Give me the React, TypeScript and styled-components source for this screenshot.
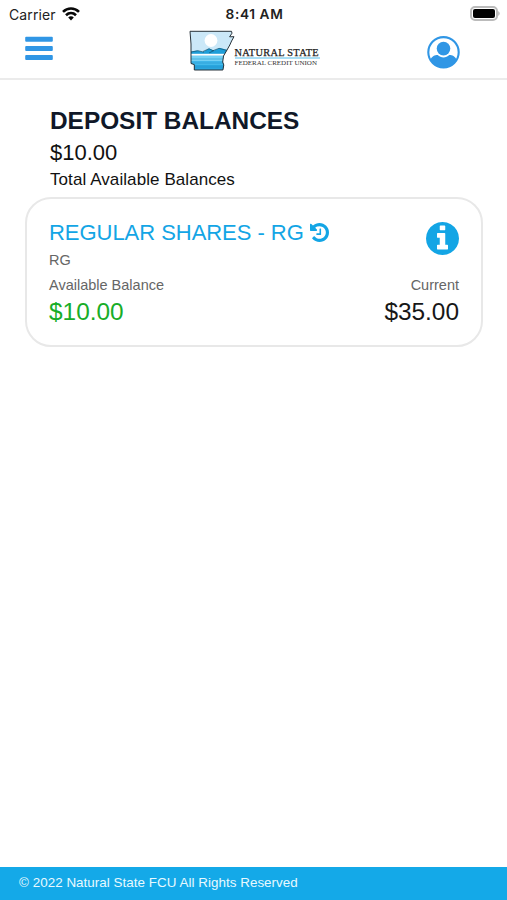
import React from "react";
import styled, { createGlobalStyle } from "styled-components";

const GlobalStyle = createGlobalStyle`
  * { box-sizing: border-box; }
  body { margin: 0; background: #fff; }
  button { border: 0; padding: 0; background: none; display: block; }
  svg { display: block; }
`;

const Screen = styled.div`
  width: 100%;
  height: 100vh;
  display: flex;
  flex-direction: column;
  overflow: hidden;
  background: #fff;
  font-family: "Liberation Sans", Arial, sans-serif;
  white-space: nowrap;
`;

const StatusBar = styled.div`
  display: grid;
  grid-template-columns: 1fr auto 1fr;
  height: 27px;
  padding: 0 7px 0 9px;
  align-items: center;
  font-family: Inter, sans-serif;
  font-size: 14px;
  line-height: 27px;
  color: #222;
`;

const Carrier = styled.div`
  display: flex;
  align-items: center;
  gap: 6px;
  letter-spacing: 0.1px;

  svg { margin-top: -1px; }
`;

const Clock = styled.div`
  font-size: 13.7px;
  font-weight: 600;
  letter-spacing: 0.6px;
  padding-top: 1px;
`;

const Battery = styled.div`
  justify-self: end;
  margin-right: -1px;
`;

const Header = styled.header`
  display: grid;
  grid-template-columns: 1fr auto 1fr;
  height: 53px;
  padding: 0 47px 0 25px;
  border-bottom: 2px solid #ebebeb;
`;

const MenuButton = styled.button`
  justify-self: start;
  align-self: start;
  padding-top: 9px;
`;

const ProfileButton = styled.button`
  justify-self: end;
  align-self: start;
  padding-top: 8px;
`;

const Brand = styled.div`
  display: flex;
  gap: 0;
  padding: 3px 0 0 23px;
`;

const BrandText = styled.div`
  padding-top: 17px;
  width: 85px;
  font-family: "Liberation Serif", serif;
`;

const BrandName = styled.div`
  height: 12px;
  font-size: 10.3px;
  line-height: 12px;
  letter-spacing: 0.32px;
  color: #222;
  border-bottom: 2px solid #a9def5;
  -webkit-text-stroke: 0.25px #222;
`;

const BrandSub = styled.div`
  font-size: 7px;
  line-height: 8px;
  letter-spacing: 0;
  color: #333;
`;

const Main = styled.main`
  flex: 1;
  padding: 25px 24px 0 25px;
`;

const Summary = styled.section`
  padding-left: 25px;
`;

const Title = styled.h1`
  margin: 0;
  font-size: 24.4px;
  line-height: 32px;
  font-weight: 700;
  color: #101828;
`;

const Total = styled.div`
  font-size: 22px;
  line-height: 31px;
  color: #111;
`;

const TotalLabel = styled.div`
  font-size: 17px;
  line-height: 24px;
  letter-spacing: 0.08px;
  color: #111;
`;

const Card = styled.section`
  height: 150px;
  margin-top: 5px;
  padding: 18px 22px 0;
  border: 2px solid #e8e8e8;
  border-radius: 26px;
`;

const CardTop = styled.div`
  display: flex;
  justify-content: space-between;
  height: 56px;
`;

const AccountName = styled.div`
  display: flex;
  align-items: center;
  gap: 6px;
  font-size: 22px;
  line-height: 31px;
  letter-spacing: -0.04px;
  color: #13a5e5;
`;

const Caption = styled.div`
  font-size: 14.5px;
  line-height: 24px;
  color: #666;
`;

const InfoButton = styled.button`
  align-self: start;
  margin-top: 5px;
  color: #13a5e5;
`;

const Balances = styled.div`
  display: flex;
  justify-content: space-between;
`;

const Balance = styled.div<{ $end?: boolean }>`
  text-align: ${(p) => (p.$end ? "right" : "left")};
`;

const Amount = styled.div<{ $available?: boolean }>`
  font-size: 24.4px;
  line-height: 30px;
  color: ${(p) => (p.$available ? "#18ad28" : "#171717")};
`;

const Footer = styled.footer`
  height: 33px;
  padding-left: 19px;
  background: #14a9e8;
  color: #e8f9ff;
  font-size: 13.4px;
  letter-spacing: 0.04px;
  line-height: 31px;
`;

const Wifi = () => (
  <svg width="18" height="14" viewBox="0 0 18 14" fill="none" stroke="#080808" strokeWidth="2.6">
    <path d="M1 4.9C5.6.4 12.4.4 17 4.9" />
    <path d="M4 8.2C6.9 5.4 11.1 5.4 14 8.2" />
    <path d="M6.2 10.4C7.8 9 10.2 9 11.8 10.4L9 13.4Z" fill="#080808" stroke="none" />
  </svg>
);

const BatteryIcon = () => (
  <svg width="31" height="16" viewBox="0 0 31 16">
    <rect x="1" y="1" width="26" height="13" rx="4" fill="#fff" stroke="#bbb" strokeWidth="2" />
    <rect x="3" y="3" width="22" height="9" rx="2" fill="#000" />
    <path d="M28.3 5Q31 7.5 28.3 10Z" fill="#aaa" />
  </svg>
);

const MenuIcon = () => (
  <svg width="28" height="24" viewBox="0 0 28 24" fill="#3096e5">
    <rect x=".2" y=".8" width="27.6" height="5" rx="1" />
    <rect x=".2" y="9.9" width="27.6" height="5" rx="1" />
    <rect x=".2" y="18.9" width="27.6" height="5" rx="1" />
  </svg>
);

const ProfileIcon = () => (
  <svg width="33" height="34" viewBox="0 0 33 34" fill="#3096e5">
    <circle cx="16.5" cy="17.3" r="15.2" fill="#fff" stroke="#3096e5" strokeWidth="2.1" />
    <circle cx="16.5" cy="13.6" r="6.8" />
    <path d="M3.4 24.9C4.9 21 7.8 20 10.7 20C14 23.3 19 23.3 22.3 20C25.2 20 28.1 21 29.6 24.9C23.5 35.2 9.5 35.2 3.4 24.9Z" />
  </svg>
);

const HistoryIcon = () => (
  <svg width="19" height="19" viewBox="0 128 1536 1536" fill="currentColor">
    <path d="M1536 896q0 156-61 298t-164 245-245 164-298 61q-172 0-327-72.5t-264-204.5q-7-10-6.5-22.5t8.5-20.5l137-138q10-9 25-9 16 2 23 12 73 95 179 147t225 52q104 0 198.5-40.5t163.5-109.5 109.5-163.5 40.5-198.5-40.5-198.5-109.5-163.5-163.5-109.5-198.5-40.5q-98 0-188 35.5t-160 101.5l137 138q31 30 14 69-17 40-59 40h-448q-26 0-45-19t-19-45v-448q0-42 40-59 39-17 69 14l130 129q107-101 244.5-156.5t284.5-55.5q156 0 298 61t245 164 164 245 61 298zm-640-288v448q0 14-9 23t-23 9h-320q-14 0-23-9t-9-23v-64q0-14 9-23t23-9h224v-352q0-14 9-23t23-9h64q14 0 23 9t9 23z" />
  </svg>
);

const InfoIcon = () => (
  <svg width="33" height="33" viewBox="0 128 1536 1536" fill="currentColor">
    <path d="M1024 1376v-160q0-14-9-23t-23-9h-96v-512q0-14-9-23t-23-9h-320q-14 0-23 9t-9 23v160q0 14 9 23t23 9h96v320h-96q-14 0-23 9t-9 23v160q0 14 9 23t23 9h448q14 0 23-9t9-23zm-128-896v-160q0-14-9-23t-23-9h-192q-14 0-23 9t-9 23v160q0 14 9 23t23 9h192q14 0 23-9t9-23zm640 416q0 209-103 385.5t-279.5 279.5-385.5 103-385.5-103-279.5-279.5-103-385.5 103-385.5 279.5-279.5 385.5-103 385.5 103 279.5 279.5 103 385.5z" />
  </svg>
);

const STATE =
  "M1 1.3H42.5L43 3.2L40.6 6.8L45 6.7L42.6 11L40.8 15L38 20L34.5 26L33.7 32L34.8 35L33.9 40H5.3V34.6L2 33.5V14Z";

const StateLogo = () => (
  <svg width="46" height="42" viewBox="0 0 46 42">
    <defs>
      <clipPath id="state">
        <path d={STATE} />
      </clipPath>
    </defs>
    <g clipPath="url(#state)">
      <rect width="46" height="42" fill="#cbe8f8" />
      <circle cx="22" cy="10.5" r="6.4" fill="#fff" />
      <path d="M0 22L8 20.5L14 22L20 18.5L25 20.5L31 18L39 20V42H0Z" fill="#1e9ed9" />
      <path d="M2 22L9 20.7L15 22.2M14 21.5L20 18.7L24 20.7L30 18.3L38 20.5M20 23L25 20.5" fill="none" stroke="#16516f" strokeWidth=".7" />
      <rect y="23.8" width="46" height="2" fill="#fff" />
      <rect y="25.8" width="46" height="5.4" fill="#76d2f5" />
      <rect y="31.2" width="46" height="4" fill="#42b9eb" />
      <rect y="35.2" width="46" height="6" fill="#2aa7df" />
      <path d="M2 29H36M2 33H36M4 37H35" stroke="#238fc5" strokeWidth=".5" />
    </g>
    <path d={STATE} fill="none" stroke="#29333a" strokeWidth="1" strokeLinejoin="round" />
  </svg>
);

export default function App() {
  return (
    <Screen>
      <GlobalStyle />
      <StatusBar>
        <Carrier>
          Carrier
          <Wifi />
        </Carrier>
        <Clock>8:41 AM</Clock>
        <Battery>
          <BatteryIcon />
        </Battery>
      </StatusBar>
      <Header>
        <MenuButton aria-label="Menu">
          <MenuIcon />
        </MenuButton>
        <Brand>
          <StateLogo />
          <BrandText>
            <BrandName>NATURAL STATE</BrandName>
            <BrandSub>FEDERAL CREDIT UNION</BrandSub>
          </BrandText>
        </Brand>
        <ProfileButton aria-label="Profile">
          <ProfileIcon />
        </ProfileButton>
      </Header>
      <Main>
        <Summary>
          <Title>DEPOSIT BALANCES</Title>
          <Total>$10.00</Total>
          <TotalLabel>Total Available Balances</TotalLabel>
        </Summary>
        <Card>
          <CardTop>
            <div>
              <AccountName>
                REGULAR SHARES - RG
                <HistoryIcon />
              </AccountName>
              <Caption>RG</Caption>
            </div>
            <InfoButton aria-label="Account details">
              <InfoIcon />
            </InfoButton>
          </CardTop>
          <Balances>
            <Balance>
              <Caption>Available Balance</Caption>
              <Amount $available>$10.00</Amount>
            </Balance>
            <Balance $end>
              <Caption>Current</Caption>
              <Amount>$35.00</Amount>
            </Balance>
          </Balances>
        </Card>
      </Main>
      <Footer>© 2022 Natural State FCU All Rights Reserved</Footer>
    </Screen>
  );
}
